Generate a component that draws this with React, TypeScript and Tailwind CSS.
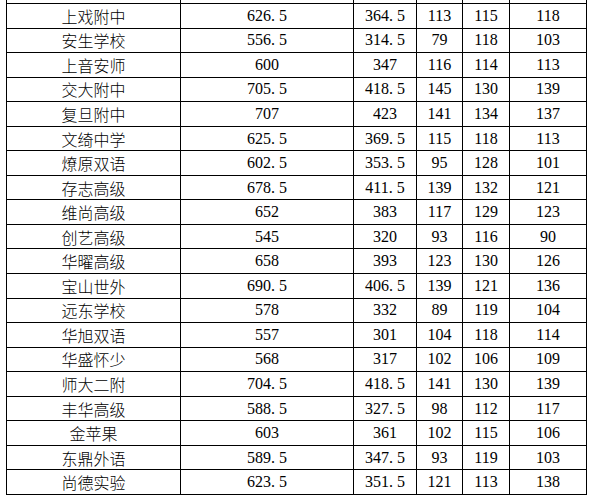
import React from "react";

type Row = [string, string, string, string, string, string];

const rows: Row[] = [
  ["上戏附中", "626.5", "364.5", "113", "115", "118"],
  ["安生学校", "556.5", "314.5", "79", "118", "103"],
  ["上音安师", "600", "347", "116", "114", "113"],
  ["交大附中", "705.5", "418.5", "145", "130", "139"],
  ["复旦附中", "707", "423", "141", "134", "137"],
  ["文绮中学", "625.5", "369.5", "115", "118", "113"],
  ["燎原双语", "602.5", "353.5", "95", "128", "101"],
  ["存志高级", "678.5", "411.5", "139", "132", "121"],
  ["维尚高级", "652", "383", "117", "129", "123"],
  ["创艺高级", "545", "320", "93", "116", "90"],
  ["华曜高级", "658", "393", "123", "130", "126"],
  ["宝山世外", "690.5", "406.5", "139", "121", "136"],
  ["远东学校", "578", "332", "89", "119", "104"],
  ["华旭双语", "557", "301", "104", "118", "114"],
  ["华盛怀少", "568", "317", "102", "106", "109"],
  ["师大二附", "704.5", "418.5", "141", "130", "139"],
  ["丰华高级", "588.5", "327.5", "98", "112", "117"],
  ["金苹果", "603", "361", "102", "115", "106"],
  ["东鼎外语", "589.5", "347.5", "93", "119", "103"],
  ["尚德实验", "623.5", "351.5", "121", "113", "138"],
];

const cols = "grid grid-cols-[174px_173px_63px_46px_47px_77px]";
const cell = "flex items-center justify-center border-r border-black";

// SimSun 风格：小数点占半角宽
function Num({ v }: { v: string }) {
  const parts = v.split(".");
  if (parts.length === 1) return <span>{v}</span>;
  return (
    <span>
      {parts[0]}
      <span className="inline-block w-[8px]">.</span>
      {parts[1]}
    </span>
  );
}

export default function App() {
  return (
    <div className="h-[497px] w-[592px] overflow-hidden bg-white text-black">
      <div className="ml-[6px] w-[581px] border-l border-black">
        <div className={`${cols} h-[4px] border-b border-black`}>
          {[0, 1, 2, 3, 4, 5].map((i) => (
            <div key={i} className="border-r border-black" />
          ))}
        </div>
        {rows.map((r, idx) => (
          <div
            key={idx}
            className={`${cols} h-[24.55px] border-b border-black text-[16px] leading-none`}
          >
            <div className={`${cell} font-['Noto_Sans_CJK_SC',sans-serif] font-light`}>
              {r[0]}
            </div>
            {r.slice(1).map((v, j) => (
              <div key={j} className={`${cell} font-['Liberation_Serif',serif]`}>
                <Num v={v} />
              </div>
            ))}
          </div>
        ))}
      </div>
    </div>
  );
}
